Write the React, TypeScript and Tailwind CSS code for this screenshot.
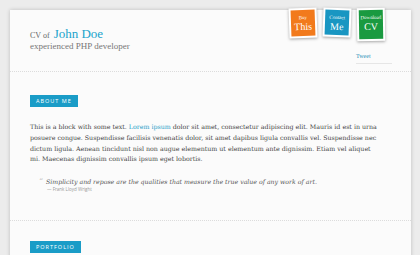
import React from "react";

const serif = { fontFamily: '"Liberation Serif", "DejaVu Serif", serif' };
const dserif = { fontFamily: '"DejaVu Serif", "Liberation Serif", serif' };
const sans = { fontFamily: '"Open Sans", "Liberation Sans", sans-serif' };

function Tab({ small, big, color, rotate, h }: { small: string; big: string; color: string; rotate: string; h: string }) {
  return (
    <div className={`bg-white p-[2px] shadow-[0_1px_3px_rgba(0,0,0,0.35)] ${rotate}`}>
      <div className={`${color} ${h} w-[24px] flex flex-col items-center pt-[5px] text-white`} style={serif}>
        <span className="text-[5px] leading-[6px]">{small}</span>
        <span className="text-[10px] leading-[11px]">{big}</span>
      </div>
    </div>
  );
}

function Badge({ children }: { children: React.ReactNode }) {
  return (
    <div className="w-fit bg-[#1a9cc7] px-[6px] py-[3px] text-[5.5px] leading-[6px] tracking-[1px] text-white" style={sans}>
      {children}
    </div>
  );
}

export default function App() {
  return (
    <div className="w-[420px] h-[255px] overflow-hidden bg-[#ececec] pt-[10px] pl-[10px]">
      <div className="relative w-[401px] h-[260px] bg-[#fbfbfb] shadow-[0_0_4px_rgba(0,0,0,0.2)]">
        <div className="absolute left-[279px] top-[-2px] flex items-start gap-[6px]">
          <Tab small="Buy" big="This" color="bg-[#f27a1c]" rotate="rotate-[-2deg]" h="h-[26px]" />
          <Tab small="Contact" big="Me" color="bg-[#1996c2]" rotate="rotate-[2deg]" h="h-[25px]" />
          <Tab small="Download" big="CV" color="bg-[#1a9a40]" rotate="rotate-[-1deg]" h="h-[29px]" />
        </div>
        <div className="absolute left-[346px] top-[42px] w-[36px] border-b border-[#e6e6e6] pb-[2px] text-[6px] text-[#2a8fb8]" style={serif}>
          Tweet
        </div>
        <div className="h-[62px] border-b border-dotted border-[#dcdcdc] pl-[20px] pt-[17px]" style={serif}>
          <div className="flex items-baseline gap-[4px] h-[14px]">
            <span className="text-[8px] text-[#666]">CV of</span>
            <span className="text-[13px] leading-[14px] text-[#1aa3cc]">John Doe</span>
          </div>
          <div className="text-[9px] leading-[10px] text-[#777]">experienced PHP developer</div>
        </div>
        <div className="px-[20px] pt-[23px]">
          <Badge>ABOUT ME</Badge>
          <p className="mt-[15px] w-[360px] text-[6.3px] leading-[10.8px] text-[#444]" style={dserif}>
            This is a block with some text. <span className="text-[#1a9cc7]">Lorem ipsum</span> dolor sit amet, consectetur adipiscing elit. Mauris id est in urna
            <br />
            posuere congue. Suspendisse facilisis venenatis dolor, sit amet dapibus ligula convallis vel. Suspendisse nec
            <br />
            dictum ligula. Aenean tincidunt nisl non augue elementum ut elementum ante dignissim. Etiam vel aliquet
            <br />
            mi. Maecenas dignissim convallis ipsum eget lobortis.
          </p>
          <div className="mt-[11px] pl-[9px]">
            <div className="flex items-baseline gap-[3px] h-[10px]">
              <span className="text-[8px] text-[#bbb]" style={dserif}>&ldquo;</span>
              <span className="text-[6.2px] italic text-[#555]" style={dserif}>
                Simplicity and repose are the qualities that measure the true value of any work of art.
              </span>
            </div>
            <div className="pl-[8px] text-[4.5px] leading-[6px] text-[#999]" style={sans}>— Frank Lloyd Wright</div>
          </div>
        </div>
        <div className="mt-[28px] border-b border-dotted border-[#dcdcdc]" />
        <div className="px-[20px] pt-[20px]">
          <Badge>PORTFOLIO</Badge>
        </div>
      </div>
    </div>
  );
}
